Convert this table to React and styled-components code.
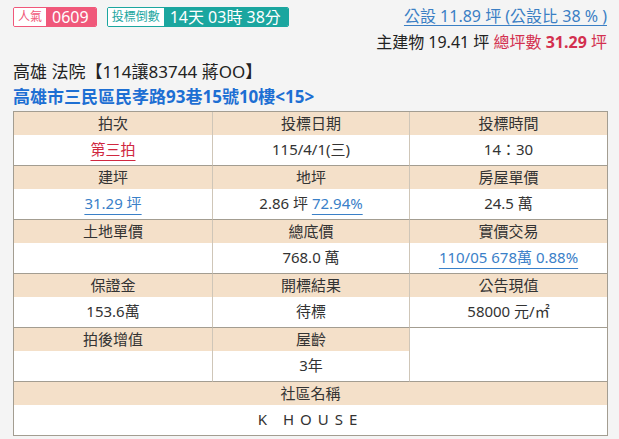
import React from "react";
import styled, { createGlobalStyle } from "styled-components";

const GlobalStyle = createGlobalStyle`
  html, body {
    margin: 0;
    padding: 0;
    background: #f4f4f4;
  }
  body {
    font-family: "Noto Sans", "Noto Sans CJK TC", sans-serif;
    color: #333;
  }
`;

const rows = [
  [
    { label: "拍次", value: "第三拍", tone: "red" },
    { label: "投標日期", value: "115/4/1(三)" },
    { label: "投標時間", value: "14：30" },
  ],
  [
    { label: "建坪", value: "31.29 坪", tone: "blue" },
    { label: "地坪", value: "2.86 坪", extra: "72.94%" },
    { label: "房屋單價", value: "24.5 萬" },
  ],
  [
    { label: "土地單價", value: "" },
    { label: "總底價", value: "768.0 萬" },
    { label: "實價交易", value: "110/05 678萬 0.88%", tone: "blue" },
  ],
  [
    { label: "保證金", value: "153.6萬" },
    { label: "開標結果", value: "待標" },
    { label: "公告現值", value: "58000 元/㎡" },
  ],
  [
    { label: "拍後增值", value: "" },
    { label: "屋齡", value: "3年" },
    { empty: true },
  ],
];

function App() {
  return (
    <Page>
      <GlobalStyle />
      <Top>
        <Badges>
          <Badge color="#f0587a">
            <span className="tag">人氣</span>
            <span className="num">0609</span>
          </Badge>
          <Badge color="#1ba69f">
            <span className="tag">投標倒數</span>
            <span className="num">14天 03時 38分</span>
          </Badge>
        </Badges>
        <Area>
          <a className="public">公設 11.89 坪 (公設比 38 % )</a>
          <div className="total">
            主建物 19.41 坪 <em>總坪數 <b>31.29</b> 坪</em>
          </div>
        </Area>
      </Top>
      <Title>高雄 法院【114讓83744 蔣OO】</Title>
      <Address>高雄市三民區民孝路93巷15號10樓&lt;15&gt;</Address>
      <Table>
        {rows.map((row, i) =>
          row.map((cell, j) =>
            cell.empty ? (
              <Cell key={`${i}-${j}`} last={j === 2} />
            ) : (
              <Cell key={`${i}-${j}`} last={j === 2}>
                <Label>{cell.label}</Label>
                <Value>
                  {cell.tone ? (
                    <Link tone={cell.tone}>{cell.value}</Link>
                  ) : (
                    cell.value
                  )}
                  {cell.extra && (
                    <>
                      {" "}
                      <Link tone="blue">{cell.extra}</Link>
                    </>
                  )}
                </Value>
              </Cell>
            )
          )
        )}
        <Cell wide last>
          <Label>社區名稱</Label>
          <Value spaced>K HOUSE</Value>
        </Cell>
      </Table>
    </Page>
  );
}

const Page = styled.div`
  padding: 7px 12px 0 13px;
  width: 619px;
  box-sizing: border-box;
`;

const Top = styled.div`
  display: flex;
  justify-content: space-between;
  align-items: flex-start;
`;

const Badges = styled.div`
  display: flex;
  gap: 10px;
`;

const Badge = styled.div`
  display: flex;
  height: 20px;
  border: 1px solid ${(p) => p.color};
  border-radius: 2px;
  overflow: hidden;
  box-sizing: border-box;
  .tag {
    background: #fff;
    color: ${(p) => p.color};
    font-size: 12px;
    line-height: 18px;
    padding: 0 4px;
  }
  .num {
    background: ${(p) => p.color};
    color: #fff;
    font-size: 16px;
    line-height: 18px;
    padding: 0 7px 0 6px;
  }
`;

const Area = styled.div`
  text-align: right;
  font-size: 16px;
  line-height: 20px;
  margin-top: -1px;
  .public {
    color: #3b7fc4;
    text-decoration: underline;
    text-underline-offset: 3px;
  }
  .total {
    margin-top: 6px;
    color: #222;
    em {
      font-style: normal;
      color: #d3304f;
    }
    b {
      font-weight: 700;
    }
  }
`;

const Title = styled.div`
  margin-top: 8px;
  font-size: 17px;
  line-height: 24px;
  color: #222;
`;

const Address = styled.div`
  font-size: 17px;
  line-height: 22px;
  font-weight: 700;
  color: #1d6fd3;
  margin-top: 2px;
  margin-bottom: 3px;
`;

const Table = styled.div`
  display: grid;
  grid-template-columns: 199px 197px 1fr;
  width: 595px;
  box-sizing: border-box;
  border: 1px solid #a39d91;
  background: #fff;
`;

const Cell = styled.div`
  grid-column: ${(p) => (p.wide ? "1 / -1" : "auto")};
  border-right: ${(p) => (p.last ? "none" : "1px solid #cfc6b8")};
  border-bottom: ${(p) => (p.wide ? "none" : "1px solid #a39d91")};
  height: 53px;
  display: flex;
  flex-direction: column;
  background: #fff;
`;

const Label = styled.div`
  height: 23px;
  line-height: 23px;
  background: #f4e0c9;
  text-align: center;
  font-size: 15px;
  color: #333;
`;

const Value = styled.div`
  height: 30px;
  line-height: 28px;
  text-align: center;
  font-size: 15px;
  color: #333;
  letter-spacing: ${(p) => (p.spaced ? "6px" : "normal")};
`;

const Link = styled.span`
  color: ${(p) => (p.tone === "red" ? "#d0283f" : "#3a80c8")};
  text-decoration: underline;
  text-underline-offset: 5px;
`;

export default App;
